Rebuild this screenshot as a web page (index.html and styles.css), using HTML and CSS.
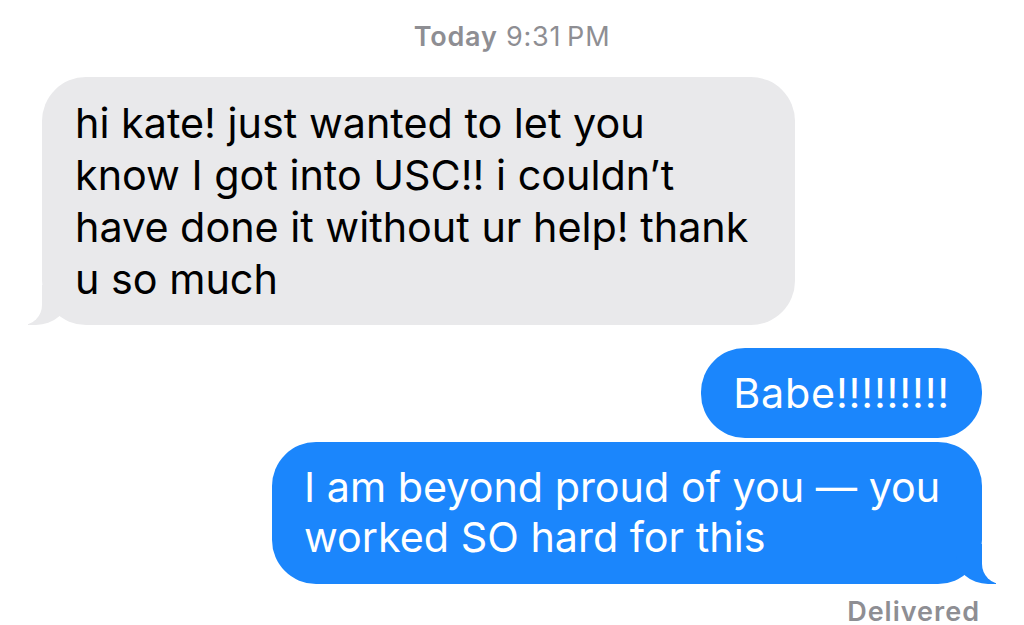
FILE: index.html
```html
<!DOCTYPE html>
<html lang="en">
<head>
  <meta charset="UTF-8" />
  <meta name="viewport" content="width=device-width, initial-scale=1.0" />
  <title>Messages</title>
  <link rel="stylesheet" href="styles.css">
</head>
<body>
  <div class="thread">
    <p class="stamp"><b>Today</b> 9:31&#8239;PM</p>

    <div class="msg in last">hi kate! just wanted to let you<br>know I got into USC!! i couldn’t<br>have done it without ur help! thank<br>u so much</div>

    <div class="msg out short">Babe!!!!!!!!!</div>
    <div class="msg out last">I am beyond proud of you — you worked SO hard for this</div>

    <p class="status">Delivered</p>
  </div>
</body>
</html>
```

FILE: styles.css
```css
body {
  margin: 0;
  background: #fff;
  font-family: 'Inter', 'Noto Sans', sans-serif;
}

.thread {
  display: flex;
  flex-direction: column;
  padding: 0 42px;
}

.stamp {
  margin: 20px 0 24px;
  text-align: center;
  font-size: 27px;
  letter-spacing: 0.8px;
  color: #8e8e93;
}

.stamp b {
  font-weight: 600;
}

.msg {
  position: relative;
  font-size: 41.3px;
  line-height: 52px;
  border-radius: 44px;
  padding: 20px 20px 20px 33px;
  box-sizing: border-box;
}

.msg.in {
  align-self: flex-start;
  width: 753px;
  background: #e9e9eb;
  color: #000;
}

.msg.out {
  align-self: flex-end;
  background: #1b86fc;
  color: #fff;
  margin-top: 4px;
  line-height: 50px;
}

.msg.out.short {
  margin-top: 23px;
  padding: 20px 32px;
  letter-spacing: 0.8px;
}

.msg.out.last {
  width: 710px;
  padding: 20px 26px 22px 32px;
}

/* bubble tails */
.msg.last::before,
.msg.last::after {
  content: "";
  position: absolute;
  bottom: 0;
  height: 40px;
}

.msg.in.last::before {
  left: -14px;
  width: 40px;
  background: #e9e9eb;
  border-bottom-right-radius: 32px 28px;
}

.msg.in.last::after {
  left: -52px;
  width: 52px;
  background: #fff;
  border-bottom-right-radius: 20px;
}

.msg.out.last::before {
  right: -14px;
  width: 40px;
  background: #1b86fc;
  border-bottom-left-radius: 32px 28px;
}

.msg.out.last::after {
  right: -52px;
  width: 52px;
  background: #fff;
  border-bottom-left-radius: 20px;
}

.status {
  align-self: flex-end;
  margin: 16px 2px 0 0;
  font-size: 27px;
  line-height: 24px;
  letter-spacing: 1px;
  font-weight: 600;
  color: #8e8e93;
}
```
